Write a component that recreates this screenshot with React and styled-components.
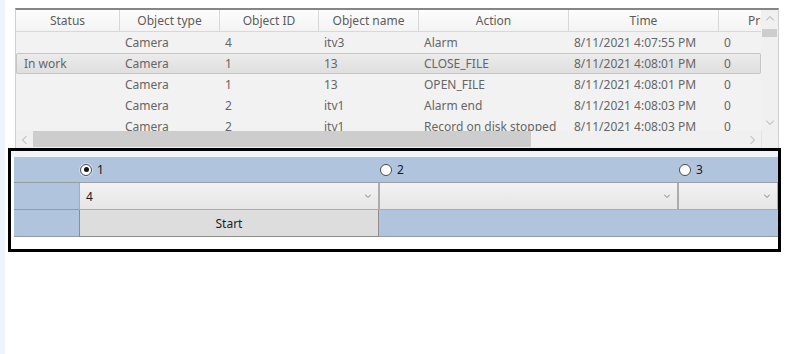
import styled, { createGlobalStyle } from "styled-components";

const Global = createGlobalStyle`
  html, body { margin: 0; padding: 0; background: #fff; }
  body {
    font-family: "Segoe UI", "Noto Sans", sans-serif;
    font-size: 12px;
  }
`;

const Page = styled.div`
  height: 354px;
  box-sizing: border-box;
  border-left: 5px solid #eef4fc;
  padding-top: 8px;
  overflow: hidden;
`;

/* ---------- event grid ---------- */

const Grid = styled.div`
  margin-left: 10px;
  width: 764px;
  height: 140px;
  box-sizing: border-box;
  border-top: 2px solid #858585;
  border-left: 1px solid #d0d0d0;
  border-right: 1px solid #d0d0d0;
  background: #f2f2f2;
  display: grid;
  grid-template-columns: 1fr 17px;
  grid-template-rows: 1fr 17px;
  overflow: hidden;
`;

const Viewport = styled.div`
  overflow: hidden;
  color: #666;
`;

const HeadRow = styled.div`
  display: flex;
  height: 22px;
  box-sizing: border-box;
  border-bottom: 1px solid #d8d8d8;
  background: linear-gradient(#fdfdfd, #f3f3f3);
  color: #5c5c5c;
`;

const HeadCell = styled.div`
  flex: 0 0 ${(p) => p.$w}px;
  box-sizing: border-box;
  border-right: 1px solid #d8d8d8;
  text-align: center;
  line-height: 21px;
  white-space: nowrap;
  overflow: hidden;
`;

const Row = styled.div`
  display: flex;
  align-items: center;
  height: 21px;
  white-space: nowrap;
  ${(p) =>
    p.$selected &&
    `
    background: linear-gradient(#ececec, #dedede);
    box-shadow: inset 0 0 0 1px #c6c6c6;
    border-radius: 2px;
  `}
`;

const Cell = styled.div`
  flex: 0 0 ${(p) => p.$w}px;
  box-sizing: border-box;
  padding-left: ${(p) => (p.$first ? 8 : 5)}px;
  overflow: hidden;
`;

const VScroll = styled.div`
  background: #f0f0f0;
  display: flex;
  flex-direction: column;
  align-items: center;
`;

const HScroll = styled.div`
  background: #f0f0f0;
  display: flex;
  align-items: stretch;
`;

const Arrow = styled.div`
  flex: 0 0 17px;
  display: flex;
  align-items: center;
  justify-content: center;
`;

const VThumb = styled.div`
  width: 15px;
  height: 8px;
  margin-top: 2px;
  background: #cdcdcd;
`;

const HThumb = styled.div`
  width: 498px;
  margin-bottom: 1px;
  background: #cdcdcd;
`;

const Spacer = styled.div`
  flex: 1;
`;

const Corner = styled.div`
  background: #f0f0f0;
  border-left: 1px solid #e4e4e4;
`;

const Chev = ({ dir, color = "#c4c4c4", size = 8 }) => {
  const pts = {
    up: "0,4 3.5,0.5 7,4",
    down: "0,0.5 3.5,4 7,0.5",
    left: "4,0 0.5,3.5 4,7",
    right: "0.5,0 4,3.5 0.5,7",
  }[dir];
  const vert = dir === "up" || dir === "down";
  const s = size;
  const t = Math.round((size * 5) / 8);
  return (
    <svg width={vert ? s : t} height={vert ? t : s} viewBox={vert ? "0 0 7 4.5" : "0 0 4.5 7"}>
      <polyline points={pts} fill="none" stroke={color} strokeWidth="1" />
    </svg>
  );
};

const columns = [
  { title: "Status", w: 104 },
  { title: "Object type", w: 100 },
  { title: "Object ID", w: 99 },
  { title: "Object name", w: 100 },
  { title: "Action", w: 150 },
  { title: "Time", w: 150 },
  { title: "Priority", w: 100 },
];

const events = [
  ["", "Camera", "4", "itv3", "Alarm", "8/11/2021 4:07:55 PM", "0"],
  ["In work", "Camera", "1", "13", "CLOSE_FILE", "8/11/2021 4:08:01 PM", "0"],
  ["", "Camera", "1", "13", "OPEN_FILE", "8/11/2021 4:08:01 PM", "0"],
  ["", "Camera", "2", "itv1", "Alarm end", "8/11/2021 4:08:03 PM", "0"],
  ["", "Camera", "2", "itv1", "Record on disk stopped", "8/11/2021 4:08:03 PM", "0"],
];

/* ---------- control panel ---------- */

const Frame = styled.div`
  margin-left: 3px;
  width: 773px;
  height: 104px;
  box-sizing: border-box;
  border: 3px solid #000;
  padding: 6px 0 0 3px;
  background: linear-gradient(#f1f5fb 0 6px, #fff 6px);
`;

const Form = styled.div`
  display: grid;
  grid-template-columns: 65px 300px 299px 1fr;
  grid-template-rows: 26px 27px 27px;
  background: #b0c4de;
  color: #1a1a1a;
`;

const BlueCell = styled.div`
  box-sizing: border-box;
  border-bottom: 1px solid #959ba3;
  grid-column: ${(p) => p.$span || "auto"};
`;

const RadioCell = styled.label`
  display: flex;
  align-items: center;
  gap: 5px;
  padding-left: 1px;
  box-sizing: border-box;
  border-bottom: 1px solid #9a9fa6;
`;

const RadioDot = styled.span`
  width: 12px;
  height: 12px;
  box-sizing: border-box;
  border-radius: 50%;
  border: 1px solid #4a4a4a;
  background: #fff;
  display: flex;
  align-items: center;
  justify-content: center;
  box-shadow: ${(p) => (p.$checked ? "0 0 0 1px #c9dcf5" : "none")};
  &::after {
    content: "";
    width: 5px;
    height: 5px;
    border-radius: 50%;
    background: ${(p) => (p.$checked ? "#141414" : "transparent")};
  }
`;

const Combo = styled.div`
  box-sizing: border-box;
  border: 1px solid #acacac;
  border-top: none;
  background: linear-gradient(#f2f2f2, #e6e6e6);
  display: flex;
  align-items: center;
  justify-content: space-between;
  padding: 0 7px 0 6px;
`;

const StartButton = styled.button`
  box-sizing: border-box;
  margin: 0;
  border: 1px solid #8d8d8d;
  border-top: none;
  background: #dddddd;
  font: inherit;
  color: #1e1e1e;
  padding: 0;
`;

const Radio = ({ label, checked }) => (
  <RadioCell>
    <RadioDot $checked={checked} />
    {label}
  </RadioCell>
);

const ComboBox = ({ value }) => (
  <Combo>
    <span>{value}</span>
    <Chev dir="down" color="#6e6e6e" size={6} />
  </Combo>
);

export default function App() {
  return (
    <>
      <Global />
      <Page>
        <Grid>
          <Viewport>
            <HeadRow>
              {columns.map((c) => (
                <HeadCell key={c.title} $w={c.w}>
                  {c.title}
                </HeadCell>
              ))}
            </HeadRow>
            {events.map((ev, i) => (
              <Row key={i} $selected={i === 1}>
                {ev.map((v, j) => (
                  <Cell key={j} $w={columns[j].w} $first={j === 0}>
                    {v}
                  </Cell>
                ))}
              </Row>
            ))}
          </Viewport>
          <VScroll>
            <Arrow>
              <Chev dir="up" />
            </Arrow>
            <VThumb />
            <Spacer />
            <Arrow>
              <Chev dir="down" />
            </Arrow>
          </VScroll>
          <HScroll>
            <Arrow>
              <Chev dir="left" />
            </Arrow>
            <HThumb />
            <Spacer />
            <Arrow>
              <Chev dir="right" />
            </Arrow>
          </HScroll>
          <Corner />
        </Grid>

        <Frame>
          <Form>
            <BlueCell />
            <Radio label="1" checked />
            <Radio label="2" />
            <Radio label="3" />

            <BlueCell />
            <ComboBox value="4" />
            <ComboBox value="" />
            <ComboBox value="" />

            <BlueCell />
            <StartButton>Start</StartButton>
            <BlueCell $span="3 / 5" />
          </Form>
        </Frame>
      </Page>
    </>
  );
}
